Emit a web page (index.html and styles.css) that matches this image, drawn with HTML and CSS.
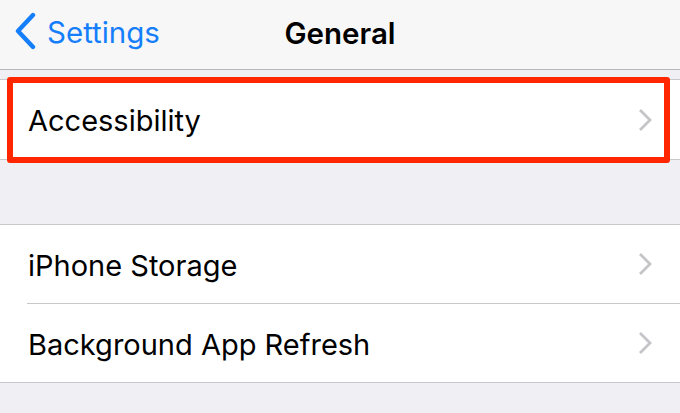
FILE: index.html
```html
<!DOCTYPE html>
<html>
<head>
<meta charset="utf-8">
<link rel="stylesheet" href="styles.css">
</head>
<body>
<header class="nav">
  <div class="back">
    <svg class="back-icon" width="24" height="38" viewBox="0 0 24 38"><path d="M19 3 L4 19 L19 35" fill="none" stroke="#147efb" stroke-width="4.4" stroke-linecap="round" stroke-linejoin="round"/></svg>
    <span>Settings</span>
  </div>
  <div class="title">General</div>
</header>
<div class="gap-top"></div>
<section class="group">
  <div class="row highlighted">
    <span class="label">Accessibility</span>
    <svg class="chev" width="14" height="24" viewBox="0 0 14 24"><path d="M2 2 L12 12 L2 22" fill="none" stroke="#c4c4c9" stroke-width="2.8"/></svg>
    <div class="highlight"></div>
  </div>
</section>
<div class="gap-mid"></div>
<section class="group">
  <div class="row">
    <span class="label">iPhone Storage</span>
    <svg class="chev" width="14" height="24" viewBox="0 0 14 24"><path d="M2 2 L12 12 L2 22" fill="none" stroke="#c4c4c9" stroke-width="2.8"/></svg>
  </div>
  <div class="row">
    <span class="label">Background App Refresh</span>
    <svg class="chev" width="14" height="24" viewBox="0 0 14 24"><path d="M2 2 L12 12 L2 22" fill="none" stroke="#c4c4c9" stroke-width="2.8"/></svg>
  </div>
</section>
</body>
</html>
```
FILE: styles.css
```css
html, body {
  margin: 0;
  padding: 0;
}
body {
  background: #efeff4;
  font-family: Inter, "Liberation Sans", sans-serif;
  width: 680px;
  height: 413px;
  overflow: hidden;
}
.nav {
  height: 69px;
  border-bottom: 1px solid #b8b8bc;
  background: #f7f7f7;
  position: relative;
  display: flex;
  align-items: center;
  justify-content: center;
}
.back {
  position: absolute;
  left: 14px;
  top: 12px;
  display: flex;
  align-items: center;
  gap: 9px;
  color: #147efb;
  font-size: 29.5px;
  height: 38px;
}
.back span {
  line-height: 38px;
  margin-top: 2px;
}
.title {
  font-size: 29.5px;
  font-weight: 600;
  color: #000;
  margin-top: -3px;
}
.gap-top {
  height: 9px;
}
.gap-mid {
  height: 64px;
}
.group {
  background: #fff;
  border-top: 1px solid #c8c7cc;
  border-bottom: 1px solid #c8c7cc;
}
.row {
  height: 78px;
  display: flex;
  align-items: center;
  justify-content: space-between;
  padding: 0 28px 0 28px;
  position: relative;
  font-size: 29px;
  color: #000;
}
.label {
  margin-top: 2px;
}
.row + .row::before {
  content: "";
  position: absolute;
  left: 27px;
  right: 0;
  top: -1px;
  height: 1px;
  background: #c8c7cc;
}
.row + .row {
  margin-top: 1px;
}
.highlighted {
  height: 79px;
}
.chev {
  display: block;
}
.highlight {
  position: absolute;
  left: 7px;
  right: 10px;
  top: -3px;
  bottom: -4px;
  border: 6px solid #ff2600;
  border-radius: 3px;
}
```
